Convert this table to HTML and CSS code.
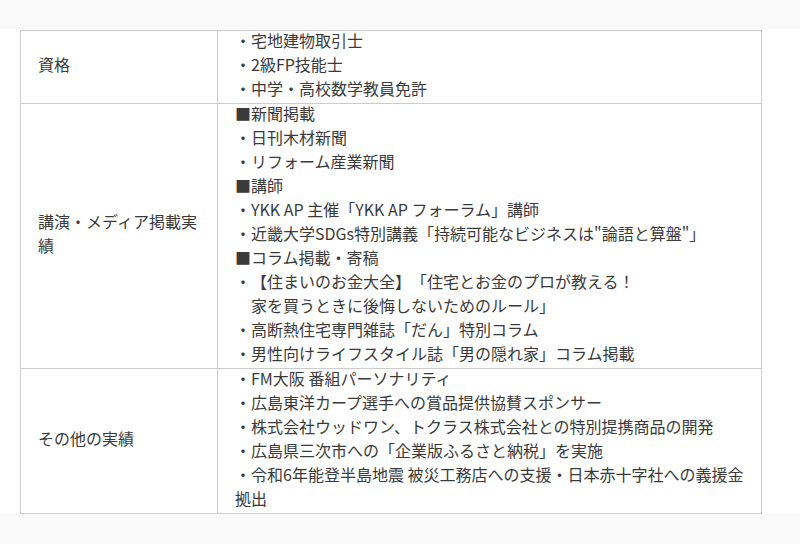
FILE: index.html
```html
<!DOCTYPE html>
<html lang="ja">
<head>
<meta charset="utf-8">
<title>プロフィール</title>
<link rel="stylesheet" href="styles.css">
</head>
<body>
<div class="top-band"></div>
<section class="profile">
  <table class="profile-table">
    <colgroup>
      <col class="col-head">
      <col class="col-body">
    </colgroup>
    <tbody>
      <tr>
        <th><div class="cell-text">資格</div></th>
        <td><div class="cell-text">・宅地建物取引士<br>・2級FP技能士<br>・中学・高校数学教員免許</div></td>
      </tr>
      <tr>
        <th><div class="cell-text">講演・メディア掲載実績</div></th>
        <td><div class="cell-text">■新聞掲載<br>・日刊木材新聞<br>・リフォーム産業新聞<br>■講師<br>・YKK AP 主催「YKK AP フォーラム」講師<br>・近畿大学SDGs特別講義「持続可能なビジネスは"論語と算盤"」<br>■コラム掲載・寄稿<br>・【住まいのお金大全】「住宅とお金のプロが教える！<br>　家を買うときに後悔しないためのルール」<br>・高断熱住宅専門雑誌「だん」特別コラム<br>・男性向けライフスタイル誌「男の隠れ家」コラム掲載</div></td>
      </tr>
      <tr>
        <th><div class="cell-text">その他の実績</div></th>
        <td><div class="cell-text">・FM大阪 番組パーソナリティ<br>・広島東洋カープ選手への賞品提供協賛スポンサー<br>・株式会社ウッドワン、トクラス株式会社との特別提携商品の開発<br>・広島県三次市への「企業版ふるさと納税」を実施<br>・令和6年能登半島地震 被災工務店への支援・日本赤十字社への義援金拠出</div></td>
      </tr>
    </tbody>
  </table>
</section>
</body>
</html>
```
FILE: styles.css
```css
html, body {
  margin: 0;
  padding: 0;
}
body {
  background: #f9f9f9;
  font-family: "Noto Sans CJK JP", sans-serif;
  font-size: 16px;
  line-height: 24px;
  color: #3a3a3a;
  text-spacing-trim: space-all;
}
.top-band {
  height: 29px;
}
.profile {
  background: #fff;
  padding: 1px 0 0 20px;
}
.profile-table {
  width: 742px;
  border-collapse: collapse;
  table-layout: fixed;
}
.col-head {
  width: 197px;
}
.profile-table th,
.profile-table td {
  border: 1px solid #ccc;
  padding: 0 17px;
  text-align: left;
  font-weight: normal;
  vertical-align: middle;
}
.profile-table td {
  vertical-align: top;
}
.cell-text {
  margin: -3px 0 3px;
}
```
